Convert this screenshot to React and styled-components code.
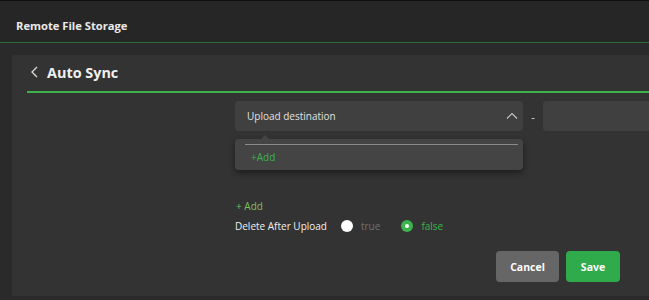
import React, { useState } from "react";
import styled, { createGlobalStyle } from "styled-components";

const GlobalStyle = createGlobalStyle`
  html, body {
    margin: 0;
    padding: 0;
    background: #262626;
    overflow: hidden;
  }
  * { box-sizing: border-box; }
`;

const Page = styled.div`
  width: 649px;
  height: 300px;
  background: #262626;
  font-family: "Open Sans", "Noto Sans", sans-serif;
  color: #e6e6e6;
  border-top: 1px solid #111;
  display: flex;
  flex-direction: column;
  overflow: hidden;
`;

const TopBar = styled.div`
  height: 42px;
  flex-shrink: 0;
  display: flex;
  align-items: center;
  padding: 7px 0 0 16px;
  font-size: 11.2px;
  font-weight: 700;
  color: #eaeaea;
  border-bottom: 1px solid #2d6a3a;
`;

const Body = styled.div`
  flex: 1;
  background: #2a2a2a;
  padding: 12px 0 4px 12px;
  display: flex;
`;

const Panel = styled.div`
  flex: 1;
  background: #333333;
  border-radius: 2px 0 0 2px;
  padding: 0 0 0 15px;
  display: flex;
  flex-direction: column;
`;

const TitleRow = styled.div`
  height: 38px;
  display: flex;
  align-items: center;
  gap: 7px;
  border-bottom: 2px solid #3cb34c;
  padding: 0 0 2px 3px;
`;

const Title = styled.span`
  font-size: 14.4px;
  font-weight: 700;
  color: #f0f0f0;
`;

const Form = styled.div`
  padding: 8px 0 0 208px;
  display: flex;
  flex-direction: column;
  position: relative;
`;

const FieldRow = styled.div`
  display: flex;
  align-items: center;
`;

const Select = styled.div`
  width: 288px;
  height: 30px;
  background: #404040;
  border-radius: 4px;
  display: flex;
  align-items: center;
  justify-content: space-between;
  padding: 0 5px 0 12px;
  font-size: 10px;
  color: #e0e0e0;
`;

const Dash = styled.span`
  width: 20px;
  text-align: center;
  font-size: 11px;
  color: #e0e0e0;
`;

const Input = styled.div`
  flex: 1;
  height: 30px;
  background: #404040;
  border-radius: 4px 0 0 4px;
`;

const Menu = styled.div`
  position: relative;
  width: 288px;
  height: 31px;
  margin-top: 8px;
  background: #444444;
  border-radius: 4px;
  box-shadow: 0 3px 6px rgba(0, 0, 0, 0.45);
  padding: 5px 5px 0 10px;
  &::before {
    content: "";
    position: absolute;
    top: -4px;
    left: 26px;
    border-left: 4px solid transparent;
    border-right: 4px solid transparent;
    border-bottom: 4px solid #444444;
  }
`;

const MenuRule = styled.div`
  height: 1px;
  background: #8a8a8a;
`;

const MenuAdd = styled.div`
  font-size: 10px;
  color: #3cb34c;
  padding: 5px 0 0 6px;
`;

const AddLink = styled.div`
  margin-top: 29px;
  font-size: 10px;
  color: #7fbf5c;
  padding-left: 1px;
`;

const OptionRow = styled.div`
  display: flex;
  align-items: center;
  margin-top: 6px;
  font-size: 10px;
`;

const Label = styled.span`
  color: #f0f0f0;
  margin-right: 14px;
`;

const Radio = styled.label`
  display: flex;
  align-items: center;
  gap: 8px;
  margin-right: 21px;
  color: ${(p) => (p.checked ? "#3cb34c" : "#707070")};
  cursor: pointer;
`;

const Dot = styled.span`
  width: 12px;
  height: 12px;
  border-radius: 50%;
  background: ${(p) => (p.checked ? "#3cb34c" : "#ffffff")};
  display: flex;
  align-items: center;
  justify-content: center;
  &::after {
    content: "";
    width: 4px;
    height: 4px;
    border-radius: 50%;
    background: #fff;
    display: ${(p) => (p.checked ? "block" : "none")};
  }
`;

const Actions = styled.div`
  display: flex;
  justify-content: flex-end;
  gap: 7px;
  padding-right: 29px;
  margin-top: 18px;
`;

const Button = styled.button`
  height: 31px;
  border: none;
  border-radius: 4px;
  padding: 0;
  width: ${(p) => (p.primary ? "54px" : "63px")};
  background: ${(p) => (p.primary ? "#2fab4b" : "#666666")};
  color: #fff;
  font-family: inherit;
  font-size: 10.5px;
  font-weight: 700;
`;

const ChevronLeft = () => (
  <svg width="10" height="12" viewBox="0 0 10 12">
    <path d="M7 1 L2 6 L7 11" fill="none" stroke="#d8d8d8" strokeWidth="1.4" />
  </svg>
);

const ChevronUp = () => (
  <svg width="12" height="8" viewBox="0 0 12 8">
    <path d="M1 6.5 L6 1.5 L11 6.5" fill="none" stroke="#c4c4c4" strokeWidth="1.2" />
  </svg>
);

export default function App() {
  const [deleteAfter, setDeleteAfter] = useState(false);
  return (
    <Page>
      <GlobalStyle />
      <TopBar>Remote File Storage</TopBar>
      <Body>
        <Panel>
          <TitleRow>
            <ChevronLeft />
            <Title>Auto Sync</Title>
          </TitleRow>
          <Form>
            <FieldRow>
              <Select>
                <span>Upload destination</span>
                <ChevronUp />
              </Select>
              <Dash>-</Dash>
              <Input />
            </FieldRow>
            <Menu>
              <MenuRule />
              <MenuAdd>+Add</MenuAdd>
            </Menu>
            <AddLink>+ Add</AddLink>
            <OptionRow>
              <Label>Delete After Upload</Label>
              <Radio checked={deleteAfter} onClick={() => setDeleteAfter(true)}>
                <Dot checked={deleteAfter} />
                true
              </Radio>
              <Radio checked={!deleteAfter} onClick={() => setDeleteAfter(false)}>
                <Dot checked={!deleteAfter} />
                false
              </Radio>
            </OptionRow>
          </Form>
          <Actions>
            <Button>Cancel</Button>
            <Button primary>Save</Button>
          </Actions>
        </Panel>
      </Body>
    </Page>
  );
}
